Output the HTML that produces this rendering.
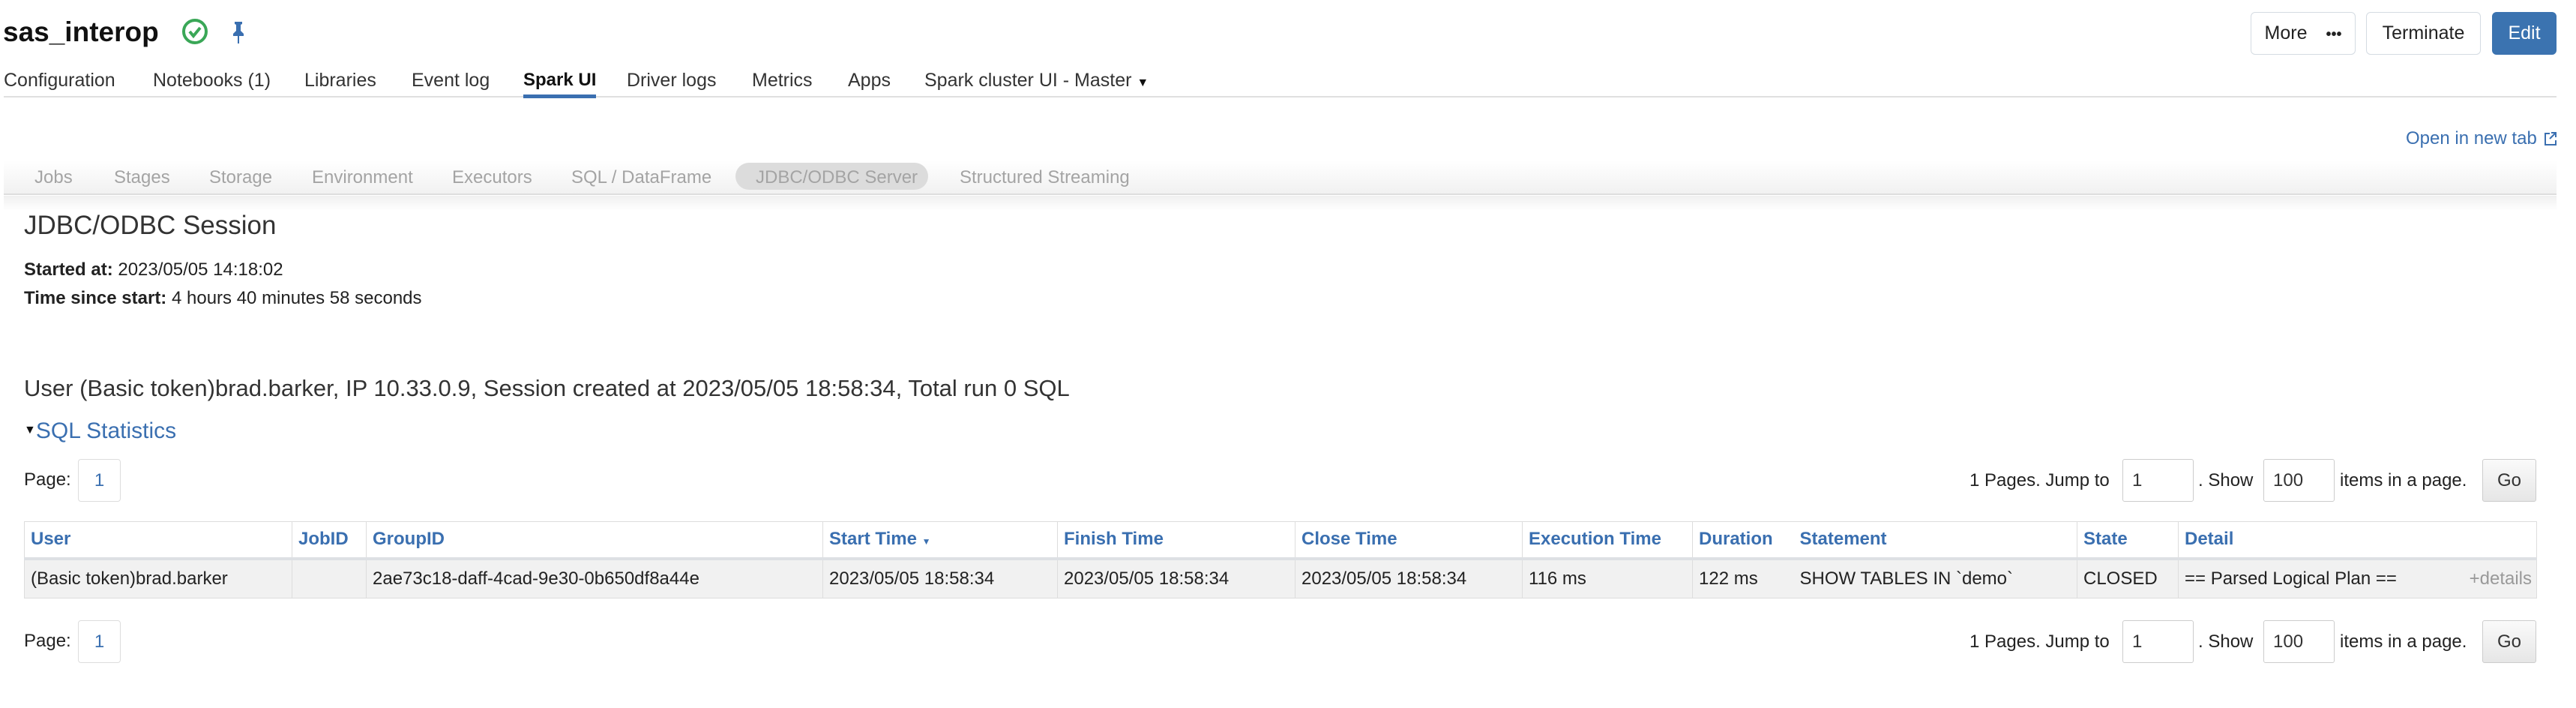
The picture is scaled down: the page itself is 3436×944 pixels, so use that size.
<!DOCTYPE html>
<html><head><meta charset="utf-8"><style>
*{margin:0;padding:0;box-sizing:border-box}
body{width:3436px;height:944px;background:#fff;font-family:"Liberation Sans",sans-serif;color:#222;position:relative;overflow:hidden}
.a{position:absolute;white-space:nowrap}
.tab{position:absolute;top:92px;font-size:25px;color:#333;line-height:30px}
.sub{position:absolute;top:222px;font-size:24px;color:#a4a4a4;line-height:30px}
.btn{position:absolute;top:16px;height:57px;border:1px solid #d4dbe2;border-radius:6px;font-size:25px;line-height:55px;text-align:center;color:#222;background:#fff}
.box{position:absolute;width:57px;height:57px;border:1px solid #ddd;border-radius:4px;font-size:24px;line-height:55px;color:#3a6fb0;text-align:center}
.inp{position:absolute;height:57px;border:1px solid #ccc;border-radius:3px;font-size:24px;line-height:55px;padding-left:12px;color:#333}
.txt{position:absolute;font-size:24px;color:#222;line-height:30px}
table{position:absolute;left:32px;top:695px;width:3351px;border-collapse:collapse;table-layout:fixed;font-size:24px}
th{height:49px;text-align:left;color:#3a6fb0;font-weight:bold;padding-left:8px;border:1px solid #ddd;border-bottom:4px solid #dde0e4}
td{height:53px;background:#f1f1f1;padding-left:8px;border:1px solid #ddd;color:#222}
</style></head><body>
<div class="a" style="left:4px;top:22px;font-size:37px;font-weight:bold;color:#111">sas_interop</div>
<svg class="a" style="left:242px;top:24px" width="36" height="36" viewBox="0 0 36 36"><circle cx="18" cy="18" r="15" fill="none" stroke="#3aa757" stroke-width="4"/><path d="M11 18l5 6 9-11" fill="none" stroke="#3aa757" stroke-width="4"/></svg>
<svg class="a" style="left:306px;top:27px" width="24" height="32" viewBox="0 0 24 32"><path d="M7 2h10v3l-2 1v8l4 4v3H5v-3l4-4V6L7 5z" fill="#3a6fb0"/><rect x="11" y="20" width="2" height="11" fill="#3a6fb0"/></svg>

<div class="tab" style="left:5px">Configuration</div>
<div class="tab" style="left:204px">Notebooks (1)</div>
<div class="tab" style="left:406px">Libraries</div>
<div class="tab" style="left:549px">Event log</div>
<div class="tab" style="left:698px;color:#111;font-weight:bold;font-size:24px">Spark UI</div>
<div class="tab" style="left:836px">Driver logs</div>
<div class="tab" style="left:1003px">Metrics</div>
<div class="tab" style="left:1131px">Apps</div>
<div class="tab" style="left:1233px">Spark cluster UI - Master <span style="font-size:16px;color:#111">▼</span></div>
<div class="a" style="left:5px;top:128px;width:3405px;height:2px;background:#e0e0e0"></div>
<div class="a" style="left:698px;top:126px;width:97px;height:5px;background:#3a6fb0"></div>

<div class="btn" style="left:3002px;width:140px">More <span style="font-size:20px;margin-left:18px;font-weight:bold">•••</span></div>
<div class="btn" style="left:3156px;width:153px">Terminate</div>
<div class="btn" style="left:3324px;width:86px;background:#3b73b0;border-color:#3b73b0;color:#fff">Edit</div>

<div class="a" style="left:3209px;top:170px;font-size:24px;color:#3a6fb0;line-height:30px">Open in new tab</div>
<svg class="a" style="left:3393px;top:175px" width="18" height="20" viewBox="0 0 18 20"><path d="M8 3H2v15h14v-6M10 2h6v6M16 2l-8 8" fill="none" stroke="#3a6fb0" stroke-width="2"/></svg>

<div class="a" style="left:5px;top:214px;width:3405px;height:46px;background:linear-gradient(#fff,#f1f1f1);border-bottom:2px solid #ddd"></div>
<div class="a" style="left:5px;top:261px;width:3405px;height:20px;background:linear-gradient(#f0f0f0,#fff)"></div>
<div class="a" style="left:981px;top:217px;width:257px;height:36px;background:#dcdcdc;border-radius:18px"></div>
<div class="sub" style="left:46px">Jobs</div>
<div class="sub" style="left:152px">Stages</div>
<div class="sub" style="left:279px">Storage</div>
<div class="sub" style="left:416px">Environment</div>
<div class="sub" style="left:603px">Executors</div>
<div class="sub" style="left:762px">SQL / DataFrame</div>
<div class="sub" style="left:1008px">JDBC/ODBC Server</div>
<div class="sub" style="left:1280px">Structured Streaming</div>

<div class="a" style="left:32px;top:280px;font-size:35px;color:#333;line-height:42px">JDBC/ODBC Session</div>
<div class="txt" style="left:32px;top:345px"><b>Started at:</b> 2023/05/05 14:18:02</div>
<div class="txt" style="left:32px;top:383px"><b>Time since start:</b> 4 hours 40 minutes 58 seconds</div>

<div class="a" style="left:32px;top:499px;font-size:31px;color:#333;line-height:38px">User (Basic token)brad.barker, IP 10.33.0.9, Session created at 2023/05/05 18:58:34, Total run 0 SQL</div>
<div class="a" style="left:32px;top:556px;font-size:30px;color:#3a6fb0;line-height:36px"><span style="color:#111;font-size:16px;vertical-align:6px">▼</span>SQL Statistics</div>

<div class="txt" style="left:32px;top:625px">Page:</div>
<div class="box" style="left:104px;top:612px">1</div>
<div class="txt" style="left:2627px;top:626px">1 Pages. Jump to</div>
<div class="inp" style="left:2831px;top:612px;width:95px">1</div>
<div class="txt" style="left:2932px;top:626px">. Show</div>
<div class="inp" style="left:3019px;top:612px;width:95px">100</div>
<div class="txt" style="left:3121px;top:626px">items in a page.</div>
<div class="inp" style="left:3311px;top:612px;width:72px;background:linear-gradient(#fafafa,#e6e6e6);padding-left:0;text-align:center">Go</div>

<table>
<colgroup><col style="width:357px"><col style="width:99px"><col style="width:609px"><col style="width:313px"><col style="width:317px"><col style="width:303px"><col style="width:227px"><col style="width:135px"><col style="width:378px"><col style="width:135px"><col style="width:478px"></colgroup>
<tr><th>User</th><th>JobID</th><th>GroupID</th><th>Start Time <span style="font-size:12px">▼</span></th><th>Finish Time</th><th>Close Time</th><th>Execution Time</th><th style="border-right:none">Duration</th><th style="border-left:none">Statement</th><th>State</th><th>Detail</th></tr>
<tr><td>(Basic token)brad.barker</td><td></td><td>2ae73c18-daff-4cad-9e30-0b650df8a44e</td><td>2023/05/05 18:58:34</td><td>2023/05/05 18:58:34</td><td>2023/05/05 18:58:34</td><td>116 ms</td><td style="border-right:none">122 ms</td><td style="border-left:none">SHOW TABLES IN `demo`</td><td>CLOSED</td><td>== Parsed Logical Plan ==<span style="float:right;color:#999;padding-right:6px">+details</span></td></tr>
</table>

<div class="txt" style="left:32px;top:840px">Page:</div>
<div class="box" style="left:104px;top:827px">1</div>
<div class="txt" style="left:2627px;top:841px">1 Pages. Jump to</div>
<div class="inp" style="left:2831px;top:827px;width:95px">1</div>
<div class="txt" style="left:2932px;top:841px">. Show</div>
<div class="inp" style="left:3019px;top:827px;width:95px">100</div>
<div class="txt" style="left:3121px;top:841px">items in a page.</div>
<div class="inp" style="left:3311px;top:827px;width:72px;background:linear-gradient(#fafafa,#e6e6e6);padding-left:0;text-align:center">Go</div>
</body></html>
